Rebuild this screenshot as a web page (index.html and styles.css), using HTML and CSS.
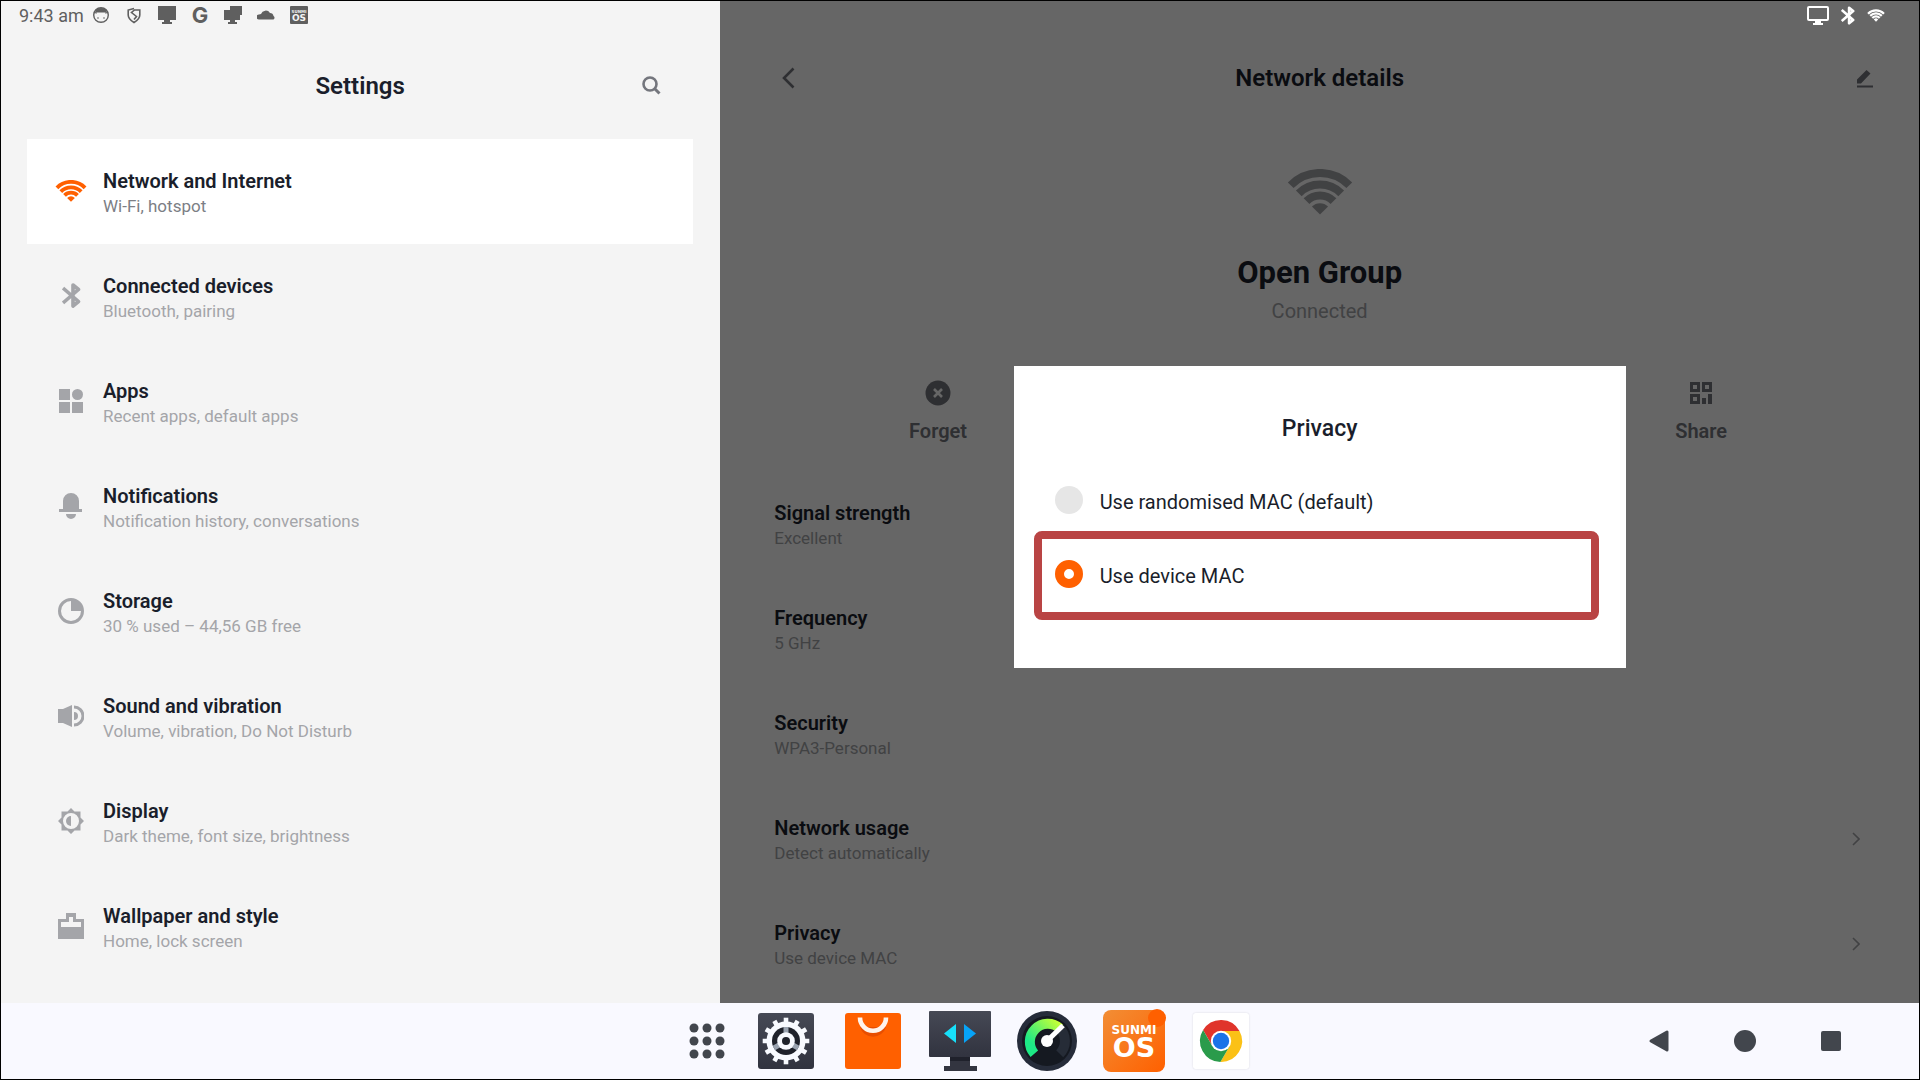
FILE: index.html
```
<!DOCTYPE html>
<html lang="en">
<head>
    <meta charset="UTF-8">
    <meta name="viewport" content="width=device-width, initial-scale=1.0">
    <title>Settings</title>
    <link rel="stylesheet" href="styles.css">
</head>
<body>

<!-- Shared icons -->
<svg class="defs" width="0" height="0" aria-hidden="true">
    <symbol id="wifi" viewBox="0 0 196 136">
        <g fill="none" stroke="currentColor" stroke-width="24">
            <path d="M11 48a122 122 0 0 1 174 0"/>
            <path d="M35 72a89 89 0 0 1 126 0"/>
            <path d="M58 95a56 56 0 0 1 80 0"/>
        </g>
        <path fill="currentColor" d="M98 135L74 111a34 34 0 0 1 48 0z"/>
    </symbol>
    <symbol id="bluetooth" viewBox="0 0 19 25">
        <path fill="none" stroke="currentColor" stroke-width="3.600" stroke-linejoin="round" d="M1 5L16.500 18.500L11 23V2L16.500 6.500L1 20"/>
    </symbol>
    <symbol id="chevron" viewBox="0 0 8 14">
        <path fill="none" stroke="currentColor" stroke-width="1.600" d="M1 1l6 6-6 6"/>
    </symbol>
</svg>

<main class="screen">
    <header class="status-bar">
        <div class="status-left">
            <span class="time">9:43 am</span>
            <svg width="18" height="18" viewBox="0 0 18 18"><circle cx="9" cy="9" r="7.300" fill="none" stroke="currentColor" stroke-width="1.400"/><path fill="currentColor" d="M3 7Q3.500 2 9 2T15 7L13.500 8V6.500H4.500V8z"/><circle cx="6" cy="12" r=".8" fill="currentColor"/><circle cx="12" cy="12" r=".8" fill="currentColor"/></svg>
            <svg width="18" height="18" viewBox="0 0 18 18"><path fill="none" stroke="currentColor" stroke-width="1.600" d="M9 2.500L3.200 4V9q0 4 5.800 7.500Q14.800 13 14.800 9V4H9.500L6.500 6.500 11.500 10.500 9 13.500"/></svg>
            <svg width="18" height="18" viewBox="0 0 18 18"><path fill="currentColor" d="M0 0h18v14h-6v2h2v2H4v-2h2v-2H0z"/></svg>
            <svg class="google" width="24" height="30" viewBox="0 0 24 30"><text x="12" y="23" text-anchor="middle" fill="currentColor">G</text></svg>
            <svg width="18" height="18" viewBox="0 0 18 18"><path fill="currentColor" d="M6 0h12v9h-2v5h-5v2h2v2H4v-2h2v-2H0V4h6z"/></svg>
            <svg width="18" height="18" viewBox="0 0 18 18"><path fill="currentColor" d="M2 13.500a2.500 2.500 0 0 1 0-5q1-.5 2-.5a5 5 0 0 1 9-1q3 0 3.500 3a2 2 0 0 1 0 3.500z"/></svg>
            <svg width="18" height="18" viewBox="0 0 18 18"><rect width="18" height="18" rx="1" fill="currentColor"/><text class="mark-top" x="9" y="7" text-anchor="middle">SUNMI</text><text class="mark-bottom" x="9" y="15" text-anchor="middle">OS</text></svg>
        </div>
        <div class="status-right">
            <svg width="22" height="19" viewBox="0 0 22 19"><rect x="1" y="1" width="20" height="13" rx="1" fill="none" stroke="currentColor" stroke-width="2"/><path fill="currentColor" d="M8 14h6v3h2v2H6v-2h2z"/></svg>
            <svg width="14" height="19"><use href="#bluetooth"/></svg>
            <svg width="18" height="13"><use href="#wifi"/></svg>
        </div>
    </header>

    <aside class="sidebar">
        <div class="panel-header">
            <h1>Settings</h1>
            <button class="icon-button search" aria-label="Search">
                <svg width="19" height="19" viewBox="0 0 19 19"><circle cx="8" cy="8" r="6.500" fill="none" stroke="currentColor" stroke-width="2.600"/><path d="M12.500 12.500l5 5" stroke="currentColor" stroke-width="3"/></svg>
            </button>
        </div>
        <nav class="menu">
            <a class="row active" href="#">
                <span class="row-icon"><svg width="32" height="22"><use href="#wifi"/></svg></span>
                <span class="row-text"><span class="row-title">Network and Internet</span><span class="row-sub">Wi-Fi, hotspot</span></span>
            </a>
            <a class="row" href="#">
                <span class="row-icon"><svg width="19" height="25"><use href="#bluetooth"/></svg></span>
                <span class="row-text"><span class="row-title">Connected devices</span><span class="row-sub">Bluetooth, pairing</span></span>
            </a>
            <a class="row" href="#">
                <span class="row-icon"><svg width="24" height="24" viewBox="0 0 24 24" fill="currentColor"><path d="M0 0h11v11H0zM0 13h11v11H0zM13 13h11v11H13z"/><circle cx="18.500" cy="5.500" r="5.500"/></svg></span>
                <span class="row-text"><span class="row-title">Apps</span><span class="row-sub">Recent apps, default apps</span></span>
            </a>
            <a class="row" href="#">
                <span class="row-icon"><svg width="24" height="26" viewBox="0 0 24 26" fill="currentColor"><path d="M4 16V8a8 8 0 0 1 16 0v8h3v3H0v-3zM7 21h10a5 5 0 0 1-10 0z"/></svg></span>
                <span class="row-text"><span class="row-title">Notifications</span><span class="row-sub">Notification history, conversations</span></span>
            </a>
            <a class="row" href="#">
                <span class="row-icon"><svg width="26" height="26" viewBox="0 0 26 26"><circle cx="13" cy="13" r="11.500" fill="none" stroke="currentColor" stroke-width="3"/><path fill="currentColor" d="M13 2v11h11A11 11 0 0 0 13 2z"/></svg></span>
                <span class="row-text"><span class="row-title">Storage</span><span class="row-sub">30 % used – 44,56 GB free</span></span>
            </a>
            <a class="row" href="#">
                <span class="row-icon"><svg width="26" height="22" viewBox="0 0 26 22"><path fill="currentColor" d="M0 4h5l9-4v22l-9-4H0zM16 7a4 4 0 0 1 0 8z"/><path fill="none" stroke="currentColor" stroke-width="3" d="M16 2a9 9 0 0 1 0 18"/></svg></span>
                <span class="row-text"><span class="row-title">Sound and vibration</span><span class="row-sub">Volume, vibration, Do Not Disturb</span></span>
            </a>
            <a class="row" href="#">
                <span class="row-icon"><svg width="26" height="26" viewBox="0 0 26 26" fill="currentColor"><path fill-rule="evenodd" d="M13 0l3.500 3.500H22.500V9.500L26 13l-3.500 3.500v6h-6L13 26l-3.500-3.500h-6v-6L0 13l3.500-3.500v-6h6zM13 5a8 8 0 1 0 0 16a8 8 0 1 0 0-16z"/><path d="M13 8v10a5 5 0 0 1 0-10z"/></svg></span>
                <span class="row-text"><span class="row-title">Display</span><span class="row-sub">Dark theme, font size, brightness</span></span>
            </a>
            <a class="row" href="#">
                <span class="row-icon"><svg width="26" height="26" viewBox="0 0 26 26" fill="currentColor"><path fill-rule="evenodd" d="M8 0h10v6h8v20H0V6h8zM11 4v5H3v5h20V9h-8V4z"/></svg></span>
                <span class="row-text"><span class="row-title">Wallpaper and style</span><span class="row-sub">Home, lock screen</span></span>
            </a>
        </nav>
    </aside>

    <section class="details">
        <div class="panel-header details-header">
            <button class="icon-button" aria-label="Back">
                <svg width="14" height="22" viewBox="0 0 14 22"><path d="M12.500 1.500L3 11l9.500 9.500" fill="none" stroke="currentColor" stroke-width="2.600"/></svg>
            </button>
            <h2>Network details</h2>
            <button class="icon-button edit" aria-label="Edit">
                <svg width="18" height="19" viewBox="0 0 18 19" fill="currentColor"><path d="M1 10.500L10.500 1 14.500 4.500 5 14.500H1zM1 16.500h16v2H1z"/></svg>
            </button>
        </div>

        <div class="network">
            <svg width="66" height="46"><use href="#wifi"/></svg>
            <h3>Open Group</h3>
            <p>Connected</p>
        </div>

        <div class="actions">
            <button class="action">
                <svg width="26" height="26" viewBox="0 0 26 26"><circle cx="13" cy="13" r="12.500" fill="currentColor"/><path d="M9 9l8 8M17 9l-8 8" stroke="#fff" stroke-width="2.600"/></svg>
                Forget
            </button>
            <button class="action share">
                <svg width="26" height="26" viewBox="0 0 26 26" fill="currentColor"><path fill-rule="evenodd" d="M2 2h10v10H2zM5 5v4h4V5zM14 2h10v10H14zM17 5v4h4V5zM2 14h10v10H2zM5 17v4h4v-4zM14 18h4v6h-4zM20 14h4v10h-4z"/></svg>
                Share
            </button>
        </div>

        <div class="properties">
            <div class="row"><span class="row-text"><span class="row-title">Signal strength</span><span class="row-sub">Excellent</span></span></div>
            <div class="row"><span class="row-text"><span class="row-title">Frequency</span><span class="row-sub">5 GHz</span></span></div>
            <div class="row"><span class="row-text"><span class="row-title">Security</span><span class="row-sub">WPA3-Personal</span></span></div>
            <a class="row" href="#"><span class="row-text"><span class="row-title">Network usage</span><span class="row-sub">Detect automatically</span></span><svg width="8" height="14"><use href="#chevron"/></svg></a>
            <a class="row" href="#"><span class="row-text"><span class="row-title">Privacy</span><span class="row-sub">Use device MAC</span></span><svg width="8" height="14"><use href="#chevron"/></svg></a>
        </div>

        <div class="scrim">
            <form class="dialog" role="dialog" aria-labelledby="dialog-title">
                <h2 id="dialog-title">Privacy</h2>
                <label class="option"><input type="radio" name="mac" value="random"><span>Use randomised MAC (default)</span></label>
                <label class="option highlighted"><input type="radio" name="mac" value="device" checked><span>Use device MAC</span></label>
            </form>
        </div>
    </section>
</main>

<footer class="dock">
    <div class="dock-apps">
        <button class="launcher" aria-label="All apps">
            <svg width="36" height="36" viewBox="0 0 36 36" fill="currentColor">
                <circle cx="5" cy="5" r="4.500"/><circle cx="18" cy="5" r="4.500"/><circle cx="31" cy="5" r="4.500"/>
                <circle cx="5" cy="18" r="4.500"/><circle cx="18" cy="18" r="4.500"/><circle cx="31" cy="18" r="4.500"/>
                <circle cx="5" cy="31" r="4.500"/><circle cx="18" cy="31" r="4.500"/><circle cx="31" cy="31" r="4.500"/>
            </svg>
        </button>
        <button aria-label="Settings">
            <svg width="56" height="56" viewBox="0 0 56 56">
                <defs><linearGradient id="slate" x1="0" y1="0" x2="0" y2="1"><stop offset="0" stop-color="#464955"/><stop offset="1" stop-color="#31333f"/></linearGradient></defs>
                <rect width="56" height="56" rx="3" fill="url(#slate)"/>
                <g stroke="#f8faff" stroke-width="4.600">
                    <path d="M28 4.700v46.600"/>
                    <path d="M28 4.700v46.600" transform="rotate(30 28 28)"/>
                    <path d="M28 4.700v46.600" transform="rotate(60 28 28)"/>
                    <path d="M28 4.700v46.600" transform="rotate(90 28 28)"/>
                    <path d="M28 4.700v46.600" transform="rotate(120 28 28)"/>
                    <path d="M28 4.700v46.600" transform="rotate(150 28 28)"/>
                </g>
                <circle cx="28" cy="28" r="19.500" fill="#f8faff"/>
                <circle cx="28" cy="28" r="14" fill="#1f222b"/>
                <path d="M28 28V14M28 28l-12.100 7M28 28l12.100 7" stroke="#9aa3b0" stroke-width="5"/>
                <circle cx="28" cy="28" r="8.800" fill="#f8faff"/>
                <circle cx="28" cy="28" r="4" fill="#1f222b"/>
            </svg>
        </button>
        <button aria-label="App Store">
            <svg width="56" height="56" viewBox="0 0 56 56">
                <rect width="56" height="56" rx="3" fill="#ff6000"/>
                <path d="M15 14a13.500 13.500 0 0 0 26 0z" fill="#e84e00"/>
                <path d="M15 4.500a13 13.300 0 0 0 26 0" fill="none" stroke="#fff4ec" stroke-width="4.600"/>
            </svg>
        </button>
        <button aria-label="Remote Assistance">
            <svg width="62" height="60" viewBox="0 0 62 60">
                <path d="M21 46h20v9h7v5H15v-5h6z" fill="#333540"/>
                <rect x="21" y="46" width="20" height="4" fill="#1f212b"/>
                <rect width="62" height="46" rx="1" fill="url(#slate)"/>
                <path d="M15 22.500L27 13v19z" fill="#17e0fa"/>
                <path d="M47 22.500L35 13v19z" fill="#07a3f7"/>
            </svg>
        </button>
        <button aria-label="Performance">
            <svg width="60" height="60" viewBox="0 0 60 60">
                <defs><linearGradient id="lime" x1="0" y1="1" x2="1" y2="0"><stop offset=".2" stop-color="#1de986"/><stop offset="1" stop-color="#c3ff38"/></linearGradient></defs>
                <circle cx="30" cy="30" r="30" fill="#262c3a"/>
                <circle cx="30" cy="30" r="25" fill="#151921"/>
                <path d="M42.700 17.300a18 18 0 0 1 0 25.400" fill="none" stroke="#262c37" stroke-width="10"/>
                <path d="M17.300 42.700A18 18 0 0 1 42.700 17.300" fill="none" stroke="url(#lime)" stroke-width="10"/>
                <path d="M30 30L46 14.500" stroke="#fff" stroke-width="5"/>
                <circle cx="30" cy="30" r="6" fill="#fff"/>
            </svg>
        </button>
        <button aria-label="SUNMI OS">
            <svg width="64" height="64" viewBox="-1 1 64 64">
                <defs><linearGradient id="orange" x1="0" y1="0" x2="1" y2="1"><stop offset="0" stop-color="#f28e35"/><stop offset="1" stop-color="#ff6000"/></linearGradient></defs>
                <rect y="2" width="62" height="62" rx="8" fill="url(#orange)"/>
                <circle cx="54" cy="10" r="9" fill="#ff6000"/>
                <text class="brand-top" x="31" y="26" text-anchor="middle">SUNMI</text>
                <text class="brand-bottom" x="31" y="49" text-anchor="middle">OS</text>
            </svg>
        </button>
        <button aria-label="Chrome">
            <svg class="chrome" width="56" height="56" viewBox="0 0 56 56">
                <rect width="56" height="56" rx="3" fill="#fff"/>
                <g transform="translate(28 28)">
                    <path d="M-17.900-11A21 21 0 0 1 18.500-10H0L-8.700 5z" fill="#e0342b"/>
                    <path d="M18.500-10A21 21 0 0 1-.6 21L8.700 5 0-10z" fill="#fbc116"/>
                    <path d="M-.6 21A21 21 0 0 1-17.900-11L-8.700 5H8.700z" fill="#2a9b4b"/>
                    <circle r="10.200" fill="#fff"/>
                    <circle r="8.200" fill="#1a73e8"/>
                </g>
            </svg>
        </button>
    </div>
    <div class="dock-nav">
        <button aria-label="Back"><svg width="24" height="24" viewBox="0 0 24 24"><path d="M4 12L20 3v18z" fill="currentColor" stroke="currentColor" stroke-width="3" stroke-linejoin="round"/></svg></button>
        <button aria-label="Home"><svg width="24" height="24" viewBox="0 0 24 24"><circle cx="12" cy="12" r="11" fill="currentColor"/></svg></button>
        <button aria-label="Recent apps"><svg width="24" height="24" viewBox="0 0 24 24"><rect x="2" y="2" width="20" height="20" rx="2" fill="currentColor"/></svg></button>
    </div>
</footer>

</body>
</html>
```
FILE: styles.css
```
* {
    box-sizing: border-box;
}
body {
    margin: 0;
    min-height: 100vh;
    display: flex;
    flex-direction: column;
    border: 1px solid #000;
    font-family: Roboto, sans-serif;
    color: #1a1e2b;
    background-color: #f9f9ff;
}
h1, h2, h3, p {
    margin: 0;
}
a {
    color: inherit;
    text-decoration: none;
}
button {
    padding: 0;
    border: none;
    background: none;
    font: inherit;
    color: inherit;
    cursor: pointer;
}
svg {
    display: block;
    flex-shrink: 0;
}
.defs {
    position: absolute;
}
.screen {
    position: relative;
    flex: 1;
    display: flex;
}

/* Status bar */
.status-bar {
    position: absolute;
    top: 0;
    left: 0;
    right: 0;
    z-index: 2;
    height: 28px;
    padding: 0 34px 0 18px;
    display: flex;
    justify-content: space-between;
    align-items: center;
}
.status-left {
    display: flex;
    align-items: center;
    gap: 15px;
    color: #5f5f5f;
}
.time {
    font-size: 18px;
    margin-right: -7px;
}
.status-right {
    display: flex;
    align-items: center;
    gap: 12px;
    color: #fff;
}
.google {
    margin: 0 -3px;
    font-family: Inter, sans-serif;
    font-size: 22px;
    font-weight: bold;
}
.mark-top, .mark-bottom {
    font-family: "DejaVu Sans", sans-serif;
    font-weight: bold;
    fill: #f4f4f4;
}
.mark-top {
    font-size: 4px;
}
.mark-bottom {
    font-size: 9px;
}

/* Left column */
.sidebar {
    width: 37.5%;
    padding: 54px 27px 24px 26px;
    background-color: #f4f4f4;
}
.panel-header {
    display: grid;
    grid-template-columns: 1fr auto 1fr;
    align-items: center;
    height: 62px;
    margin-bottom: 22px;
}
h1, h2 {
    font-size: 24px;
    font-weight: 600;
    line-height: 32px;
}
.panel-header h1 {
    grid-column: 2;
}
.search {
    justify-self: end;
    margin-right: 32px;
    padding-bottom: 2px;
    color: #74767d;
}
.row {
    display: flex;
    align-items: center;
    min-height: 105px;
    padding: 0 28px;
}
.row.active {
    background-color: #fff;
}
.row-icon {
    width: 32px;
    margin-right: 16px;
    padding-bottom: 2px;
    display: flex;
    justify-content: center;
    color: #a4a5a9;
}
.active .row-icon {
    color: #ff6000;
}
.row-text {
    flex: 1;
    display: flex;
    flex-direction: column;
    padding-top: 2px;
}
.row-title {
    font-size: 20px;
    font-weight: 600;
    line-height: 26px;
}
.row-sub {
    font-size: 17px;
    line-height: 24px;
    color: #a4a5a9;
}
.active .row-sub {
    color: #7c7e85;
}

/* Right column */
.details {
    position: relative;
    flex: 1;
    padding: 54px 27px 7px;
    background-color: #fff;
}
.details-header {
    height: 46px;
    margin-bottom: 68px;
    padding: 0 18px 0 34px;
}
.details-header .icon-button {
    justify-self: start;
    color: #74767d;
}
.details-header .edit {
    justify-self: end;
}
.details-header h2 {
    padding-left: 16px;
    margin-right: 32px;
}
.network {
    display: flex;
    flex-direction: column;
    align-items: center;
}
.network svg {
    color: #a4a5a9;
}
.network h3 {
    margin-top: 37px;
    font-size: 31px;
    font-weight: 700;
    line-height: 42px;
}
.network p {
    margin-top: 3px;
    font-size: 20px;
    line-height: 28px;
    color: #a4a5a9;
}
.actions {
    display: grid;
    grid-template-columns: 1fr 1fr 1fr;
    margin-top: 55px;
    margin-bottom: 27px;
}
.action {
    display: flex;
    flex-direction: column;
    align-items: center;
    gap: 12px;
    font-size: 20px;
    font-weight: 600;
    line-height: 26px;
    color: #74767d;
}
.action.share {
    grid-column: 3;
}
.properties .row {
    padding: 0 32px 0 27px;
}
.properties svg {
    color: #a4a5a9;
}

/* Privacy dialog */
.scrim {
    position: absolute;
    inset: 0;
    padding-top: 30px;
    display: flex;
    justify-content: center;
    align-items: center;
    background-color: rgba(0, 0, 0, 0.6);
}
.dialog {
    width: 612px;
    max-width: 90%;
    padding: 47px 0 57px;
    background-color: #fff;
}
.dialog h2 {
    margin-bottom: 18px;
    font-size: 23px;
    font-weight: 500;
    text-align: center;
}
.option {
    position: relative;
    display: flex;
    align-items: center;
    gap: 17px;
    height: 74px;
    padding: 0 41px;
    font-size: 20px;
}
.option span {
    padding-top: 4px;
}
.option input {
    appearance: none;
    width: 28px;
    height: 28px;
    margin: 0;
    border-radius: 50%;
    background-color: #e6e6e6;
}
.option input:checked {
    border: 9px solid #ff6000;
    background-color: #fff;
}
.highlighted::after {
    content: "";
    position: absolute;
    inset: -6px 27px -9px 20px;
    border: 8px solid #b94444;
    border-radius: 8px;
}

/* Dock */
.dock {
    display: grid;
    grid-template-columns: 1fr auto 1fr;
    height: 76px;
    color: #42464d;
}
.dock button {
    display: flex;
    justify-content: center;
    align-items: center;
    width: 87px;
}
.dock-apps {
    grid-column: 2;
    display: flex;
    padding-left: 15px;
}
.dock .launcher {
    width: 72px;
}
.dock-nav {
    display: flex;
    justify-content: flex-end;
    padding-right: 45px;
}
.dock-nav button {
    width: 86px;
}
.brand-top, .brand-bottom {
    font-family: "DejaVu Sans", sans-serif;
    font-weight: bold;
    fill: #fff;
}
.brand-top {
    font-size: 12px;
}
.brand-bottom {
    font-size: 27px;
}
.chrome {
    border-radius: 3px;
    box-shadow: 0 0 2px rgba(0, 0, 0, 0.15);
}
```
